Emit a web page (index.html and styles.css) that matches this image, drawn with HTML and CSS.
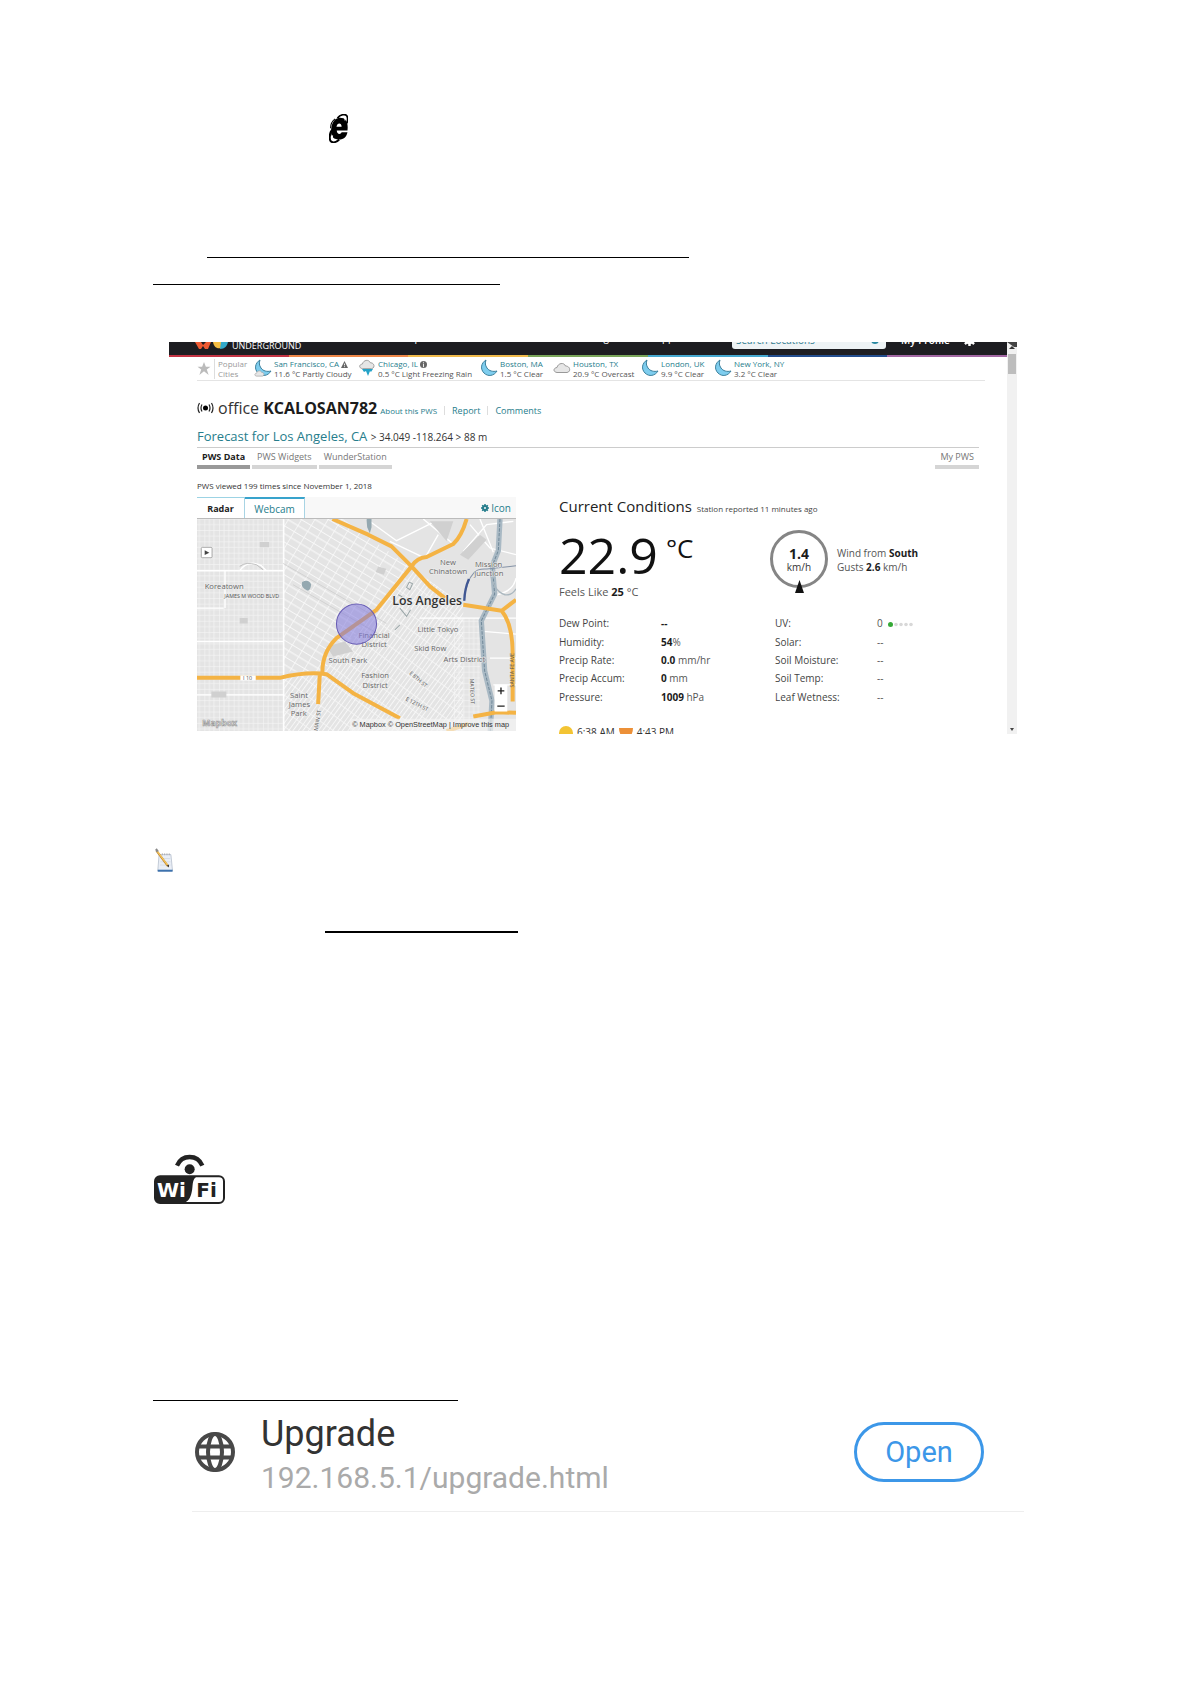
FILE: index.html
```html
<!DOCTYPE html>
<html lang="en">
<head>
<meta charset="utf-8">
<title>Weather station manual</title>
<link rel="stylesheet" href="styles.css">
</head>
<body>
<svg class="defs" width="0" height="0" aria-hidden="true">
  <defs>
    <symbol id="moon" viewBox="0 0 18 18"><path d="M6 1C1 4 0 10 4 14c4 4 10 3 13-2-4 1-8 0-10-3C5 6 5 4 6 1z" fill="#7ecdee" stroke="#3b7f9c" stroke-width="1"/></symbol>
    <symbol id="cloud" viewBox="0 0 18 12"><path d="M4 10.500C0 10 0 6 4 5.500 5 1 11 0 12.500 4c5 0 5.500 6 1.500 6.500z" fill="#e6e6e6" stroke="#999" stroke-width="1"/></symbol>
    <symbol id="gear" viewBox="-8 -8 16 16"><circle r="4" fill="none" stroke="currentColor" stroke-width="4"/><path d="M0-8V-4M0 4V8M-8 0H-4M4 0H8M-5.600-5.600l2 2M3.600 3.600l2 2M-5.600 5.600l2-2M3.600-3.600l2-2" stroke="currentColor" stroke-width="3"/></symbol>
  </defs>
</svg>
<main class="page">
  <svg class="browser-icon" viewBox="0 0 54 84" role="img" aria-label="Browser">
    <path d="M53 48H22c0 11 11 13 14 5h17C50 68 42 74 29 74 8 74 3 60 6 42 9 22 18 11 32 11c16 0 24 12 21 37z"/>
    <path d="M21 37c2-13 15-13 15 0z" fill="#fff"/>
    <path d="M24 12C33 1 46-1 51 5c4 6 3 13 0 22" fill="none" stroke="#000" stroke-width="5"/>
    <path d="M4 41c0-12 5-21 13-27" fill="none" stroke="#000" stroke-width="3"/>
    <path d="M6 48C0 62 0 76 6 80c6 4 16 1 23-6" fill="none" stroke="#000" stroke-width="6"/>
    <path d="M34 9c9-3 13 2 12 10M10 62c-3 10 1 14 9 11" fill="none" stroke="#fff" stroke-width="3"/>
  </svg>
  <hr class="rule rule-long">
  <hr class="rule rule-medium">

  <section class="frame">
    <div class="site">
      <header class="nav">
        <svg class="logo" viewBox="0 0 34 8"><path d="M0 0h6l2 3 3-3h5l-3 7h-3L8 4 6 7H4z" fill="#ee5a32"/><path d="M18 0c1 6 5 7 8 6V0z" fill="#f5bd42"/><path d="M25 7c5 0 7-3 8-7h-7z" fill="#32a9c9"/></svg>
        <span class="brand">UNDERGROUND</span>
        <nav class="menu"><a href="#">Maps</a><a href="#">Blogs</a><a href="#">Apps</a></nav>
        <label class="search"><input type="text" placeholder="Search Locations" aria-label="Search Locations"><svg viewBox="0 0 9 9"><circle cx="4" cy="4" r="3" fill="none" stroke="#2787a0" stroke-width="2"/></svg></label>
        <a class="profile" href="#">My Profile</a>
        <svg class="nav-gear"><use href="#gear"/></svg>
      </header>
      <div class="stripe"><i></i><i></i><i></i><i></i><i></i><i></i><i></i></div>
      <div class="content">
        <div class="cities">
          <svg class="star" viewBox="0 0 14 14"><path d="M7 0l2 5h5l-4 3 2 6-5-4-5 4 2-6-4-3h5z" fill="#bbb"/></svg>
          <span class="popular">Popular<br>Cities</span>
          <div class="city"><svg viewBox="0 0 18 18"><use href="#moon" width="18" height="18"/><use href="#cloud" y="11" width="11" height="7"/></svg><p><a href="#">San Francisco, CA</a> <svg class="mark" viewBox="0 0 8 8"><path d="M4 0l4 8H0z" fill="#666"/><path d="M4 3v2M4 6v1" stroke="#fff"/></svg><br>11.6 °C Partly Cloudy</p></div>
          <div class="city"><svg viewBox="0 0 18 18"><use href="#cloud" width="18" height="11"/><path d="M4 10h11l-2 3-1-1-2 5-2-5-2 1z" fill="#24a3c8"/></svg><p><a href="#">Chicago, IL</a> <svg class="mark" viewBox="0 0 8 8"><circle cx="4" cy="4" r="4" fill="#666"/><path d="M4 1v1M4 3v4" stroke="#fff"/></svg><br>0.5 °C Light Freezing Rain</p></div>
          <div class="city"><svg><use href="#moon"/></svg><p><a href="#">Boston, MA</a><br>1.5 °C Clear</p></div>
          <div class="city"><svg viewBox="0 0 18 18"><use href="#cloud" y="3" width="18" height="12"/></svg><p><a href="#">Houston, TX</a><br>20.9 °C Overcast</p></div>
          <div class="city"><svg><use href="#moon"/></svg><p><a href="#">London, UK</a><br>9.9 °C Clear</p></div>
          <div class="city"><svg><use href="#moon"/></svg><p><a href="#">New York, NY</a><br>3.2 °C Clear</p></div>
        </div>

        <div class="station">
          <svg class="signal" viewBox="0 0 17 12"><circle cx="8.500" cy="6" r="2.500"/><path d="M5 2.500q-2 3.500 0 7M2.500 1q-3 5 0 10M12 2.500q2 3.500 0 7M14.500 1q3 5 0 10" fill="none" stroke="#222" stroke-width="1.200"/></svg>
          <h1>office <b>KCALOSAN782</b></h1>
          <a class="about" href="#">About this PWS</a><a href="#">Report</a><a href="#">Comments</a>
        </div>
        <p class="forecast"><a href="#">Forecast for Los Angeles, CA</a> <small>&gt; 34.049 -118.264 &gt; 88 m</small></p>
        <nav class="tabs"><a class="active" href="#">PWS Data</a><a href="#">PWS Widgets</a><a href="#">WunderStation</a><a class="mine" href="#">My PWS</a></nav>
        <p class="viewed">PWS viewed 199 times since November 1, 2018</p>

        <div class="columns">
          <section class="radar">
            <div class="radar-tabs"><button class="on">Radar</button><button>Webcam</button><a href="#"><svg><use href="#gear"/></svg>Icon</a></div>
            <svg class="map" viewBox="22 103 956 636" role="img" aria-label="Map of Los Angeles">
              <defs>
                <pattern id="blocks" width="44" height="34" patternUnits="userSpaceOnUse"><path d="M0 1H44M1 0V34M15 0V34M29 0V34" stroke="#f6f6f6" stroke-width="2"/><path d="M0 18H44" stroke="#f4f4f4" stroke-width="2"/></pattern>
                <pattern id="tilted" width="34" height="42" patternUnits="userSpaceOnUse" patternTransform="rotate(31)"><path d="M0 1H34M1 0V42M0 22H34" stroke="#f8f8f8" stroke-width="3"/></pattern>
                <pattern id="dense" width="24" height="38" patternUnits="userSpaceOnUse" patternTransform="rotate(36)"><path d="M0 1H24M1 0V38M12 0V38" stroke="#f8f8f8" stroke-width="3"/></pattern>
              </defs>
              <path d="M22 103h956v636H22z" fill="#e4e4e4"/>
              <path d="M22 103h260v636H22z" fill="url(#blocks)"/>
              <path d="M282 103H460L660 245 560 375 400 560H282z" fill="url(#tilted)"/>
              <path d="M660 245L820 360V739H282V580L400 560 560 375z" fill="url(#dense)"/>
              <path d="M790 400h80v339h-80z" fill="url(#blocks)"/>
              <path d="M530 103l90 65 110-55M600 170l105 50 40-70M700 103l90 75M820 200l70-80 80-10M840 120l60 70 78 20M870 103l40 100M920 330q50-10 58-50M22 258h260M106 258v112M22 370h80M22 470h260M282 103v636M22 630h260M150 258q25-35 65-15l15 15M690 400h288M880 440l98 8M900 520h78M910 600h68" fill="none" stroke="#fff" stroke-width="4"/>
              <path d="M210 172h28v16h-28zM565 245l24 7-7 18-25-8zM150 400h24v16h-24zM65 620h45v18H65zM720 110l70 0-20 60zM410 485l55-15 25 30-60 15zM810 210l60-60 20 15-55 60z" fill="#d0d0d0"/>
              <path d="M280 236l310 180M310 300l260 150" stroke="#c8c8c8" stroke-width="2"/>
              <path d="M150 245q20-15 50-5l20 15" fill="none" stroke="#aaa" stroke-width="2"/>
              <path d="M337 292q20-10 27 7-2 20-12 18-20-8-15-25M530 103h15v25l-5 18-8-18z" fill="#94a8b0"/>
              <path d="M930 103l-5 95-18 45 7 85-40 80 10 150 22 90-5 91" fill="none" stroke="#a9b9c4" stroke-width="16"/>
              <path d="M930 103l-5 95-18 45 7 85-40 80 10 150 22 90-5 91" fill="none" stroke="#71899a" stroke-width="3" stroke-dasharray="10 4"/>
              <path d="M823 348q5-60 30-85 10-12 38-10l87-10" fill="none" stroke="#8492a6" stroke-width="3"/><path d="M823 348q1-35 14-65" fill="none" stroke="#405793" stroke-width="7"/>
              <path d="M900 260q10 60 45 70 20 3 33-18" fill="none" stroke="#aab7bf" stroke-width="4"/>
              <path d="M428 103L535 150 605 185 665 245 720 305 765 340M665 245Q680 220 710 217L790 178Q815 155 830 103M665 245L560 375 440 460Q395 505 398 568M22 579H270Q350 560 410 568L490 625 630 700M390 568l-5 90M820 360L935 378 978 345M935 378Q970 420 968 520V650M850 695L920 682 978 684M770 739l65-22" fill="none" stroke="#f4b344" stroke-width="12" stroke-linejoin="round"/>
              <path d="M650 308l8-16 10 5-8 18zM625 330l12 6M630 370l20 25 12-20M615 435l15-15" fill="none" stroke="#9aa6a8" stroke-width="3"/>
              <g class="places">
                <text x="45" y="314">Koreatown</text><text x="750" y="241">New</text><text x="717" y="269">Chinatown</text><text x="855" y="247">Mission</text><text x="853" y="275">Junction</text>
                <text x="683" y="443">Little Tokyo</text><text x="506" y="461">Financial</text><text x="515" y="488">District</text><text x="673" y="498">Skid Row</text><text x="761" y="533">Arts District</text><text x="416" y="535">South Park</text><text x="514" y="581">Fashion</text><text x="518" y="608">District</text><text x="301" y="640">Saint</text><text x="297" y="667">James</text><text x="303" y="694">Park</text>
              </g>
              <g class="roads-text"><text x="104" y="340">JAMES M WOOD BLVD</text><path d="M152 572h46v15h-46z" fill="#fff"/><text x="160" y="586">I 10</text><text transform="translate(657 567) rotate(40)">E 8TH ST</text><text transform="translate(646 646) rotate(27)">E 12TH ST</text><text transform="translate(840 582) rotate(88)">MATEO ST</text><text transform="translate(971 608) rotate(-90)">SANTA FE AVE</text><text transform="translate(383 738) rotate(-80)">MAIN ST</text></g>
              <text class="la" x="607" y="361">Los Angeles</text>
              <circle cx="500" cy="418" r="60" fill="#8179dc" fill-opacity=".55" stroke="#665bb4" stroke-width="3"/>
              <rect x="35" y="188" width="32" height="31" rx="3" fill="#fff" stroke="#888" stroke-width="2"/><path d="M45 197l14 7-14 7z" fill="#444"/>
              <path d="M914 600h38v80h-38z" fill="#fff"/><path d="M923 618h20M933 608v20M922 664h22" stroke="#222" stroke-width="4"/>
              <text class="mapbox" x="38" y="722">Mapbox</text>
              <path d="M480 702h498v37H480z" fill="#f4f4f4" opacity=".65"/><text class="credit" x="487" y="726">© Mapbox © OpenStreetMap | Improve this map</text>
            </svg>
          </section>

          <section class="conditions">
            <h2>Current Conditions <small>Station reported 11 minutes ago</small></h2>
            <div class="now">
              <div class="temperature"><p class="degrees">22.9<sup>°C</sup></p><p class="feels">Feels Like <b>25</b> °C</p></div>
              <div class="dial"><p><b>1.4</b>km/h</p><svg viewBox="0 0 9 13"><path d="M4.500 0L9 13H0z" fill="#111"/></svg></div>
              <p class="wind">Wind from <b>South</b><br>Gusts <b>2.6</b> km/h</p>
            </div>
            <div class="readings">
              <table>
                <tr><th scope="row">Dew Point:</th><td><b>--</b></td></tr>
                <tr><th scope="row">Humidity:</th><td><b>54</b>%</td></tr>
                <tr><th scope="row">Precip Rate:</th><td><b>0.0</b> mm/hr</td></tr>
                <tr><th scope="row">Precip Accum:</th><td><b>0</b> mm</td></tr>
                <tr><th scope="row">Pressure:</th><td><b>1009</b> hPa</td></tr>
              </table>
              <table>
                <tr><th scope="row">UV:</th><td>0 <svg class="uv" viewBox="0 0 25 5"><circle cx="2.500" cy="2.500" r="2.500" fill="#35a936"/><g fill="#d8d8d8"><circle cx="8" cy="2.500" r="1.800"/><circle cx="13" cy="2.500" r="1.800"/><circle cx="18" cy="2.500" r="1.800"/><circle cx="23" cy="2.500" r="1.800"/></g></svg></td></tr>
                <tr><th scope="row">Solar:</th><td>--</td></tr>
                <tr><th scope="row">Soil Moisture:</th><td>--</td></tr>
                <tr><th scope="row">Soil Temp:</th><td>--</td></tr>
                <tr><th scope="row">Leaf Wetness:</th><td>--</td></tr>
              </table>
            </div>
            <p class="sun"><svg viewBox="0 0 14 14"><circle cx="7" cy="7" r="7" fill="#f3c433"/></svg>6:38 AM<svg viewBox="0 0 14 14"><path d="M0 2h14q0 9-7 9T0 2" fill="#ec9038"/></svg>4:43 PM</p>
          </section>
        </div>
      </div>
    </div>
    <div class="scrollbar"><svg viewBox="0 0 10 12"><path d="M0 0h10v5H7z" fill="#444"/><path d="M2 7l3-3 3 3z" fill="#333"/></svg><i></i><svg class="down" viewBox="0 0 10 12"><path d="M3 6h4L5 9z" fill="#444"/></svg></div>
  </section>

  <svg class="note-icon" viewBox="0 0 54 76" role="img" aria-label="Note"><path d="M12 20h36l5 50H8z" fill="#e9eef6" stroke="#a9b4c4" stroke-width="2"/><path d="M8 66h45v6H8z" fill="#3c72ae"/><path d="M15 18v6M22 16v6M29 16v6M36 16v6M43 16v6" stroke="#999" stroke-width="2"/><path d="M18 32h28M16 42h31M15 52h32" stroke="#cdd5df" stroke-width="2"/><path d="M4 8l35 47" stroke="#b9812b" stroke-width="6"/><path d="M5 8l33 44" stroke="#f7c65b" stroke-width="4"/><path d="M0 5l5-4 6 8-6 4z" fill="#888"/><path d="M36 54l6-4 0 9z" fill="#333"/></svg>
  <hr class="rule rule-thick">

  <svg class="wifi-icon" viewBox="0 0 216 150" role="img" aria-label="WiFi">
    <path d="M69 35q11-26 38-26t38 26" fill="none" stroke="#222" stroke-width="13"/><circle cx="107" cy="46" r="15" fill="#222"/>
    <rect x="3" y="67" width="207" height="80" rx="15" fill="#fff" stroke="#222" stroke-width="6"/><path d="M18 67h112c-18 8-12 30-17 48-4 18-10 29-27 32H18Q3 147 3 132V82Q3 67 18 67z" fill="#222"/>
    <text x="9" y="130" fill="#fff">Wi</text><text x="127" y="130" fill="#222">Fi</text>
  </svg>
  <hr class="rule rule-short">

  <section class="upgrade">
    <svg class="globe" viewBox="0 0 40 40" fill="none" stroke="#484848" stroke-width="4"><circle cx="20" cy="20" r="18"/><ellipse cx="20" cy="20" rx="7" ry="18"/><path d="M3 14.500h34M3 25.500h34"/></svg>
    <div><h2>Upgrade</h2><p>192.168.5.1/upgrade.html</p></div>
    <button>Open</button>
  </section>
</main>
</body>
</html>
```
FILE: styles.css
```css
* { box-sizing: border-box; }
body { margin: 0; background: #fff; color: #333; font-family: "Open Sans", "Noto Sans", sans-serif; }
h1, h2, p { margin: 0; font-weight: 400; }
a { color: #267d8c; text-decoration: none; }
b { color: #1c1c1c; }
button { font-family: inherit; cursor: pointer; }
svg { display: block; flex: none; }
.defs { position: absolute; }

.page { padding: 114px 166px 172px 152px; }
.browser-icon { width: 19px; height: 29px; margin-left: 177px; }
.rule { height: 1px; margin: 0; border: 0; background: #000; }
.rule-long { width: 482px; margin: 114px 0 0 55px; }
.rule-medium { width: 347px; margin: 26px 0 0 1px; }
.rule-thick { width: 193px; height: 2px; margin: 58px 0 0 173px; }
.rule-short { width: 305px; margin: 196px 0 0 1px; }

/* weather site inside its scrolling pane */
.frame { display: flex; height: 392px; margin: 57px 7px 0 17px; overflow: hidden; }
.site { flex: 1; min-width: 0; }
.nav { display: flex; align-items: flex-end; height: 13px; padding: 0 31px 0 26px; overflow: hidden; background: #1d1d21; color: #fff; }
.logo { width: 34px; height: 8px; align-self: flex-start; }
.brand { width: 116px; padding-left: 3px; font: 9px/18px "Open Sans", sans-serif; }
.menu { display: flex; flex: 1; padding-left: 55px; font-size: 10px; line-height: 36px; }
.menu a { color: #fff; }
.menu a:nth-child(2) { margin-left: 163px; }
.menu a:nth-child(3) { margin-left: 42px; }
.search { display: flex; align-items: flex-end; width: 154px; height: 20px; margin-bottom: 6px; padding: 0 6px 2px 4px; border-radius: 3px; background: #eef3f5; }
.search input { flex: 1; min-width: 0; height: 14px; padding: 0; border: 0; background: none; font: 10px/14px "Open Sans", sans-serif; }
.search input::placeholder { color: #327b90; opacity: 1; }
.search svg { width: 9px; height: 9px; margin-bottom: 2px; }
.profile { width: 62px; margin-left: 15px; color: #fff; font-size: 10px; font-weight: 600; line-height: 30px; }
.nav-gear { width: 13px; height: 13px; margin-bottom: 9px; }
.stripe { display: flex; height: 2px; }
.stripe i { flex: 1; background: #c33343; }
.stripe i:nth-child(2) { background: #ee8748; }
.stripe i:nth-child(3) { background: #f0ba4b; }
.stripe i:nth-child(4) { background: #7aa65a; }
.stripe i:nth-child(5) { background: #45a8d0; }
.stripe i:nth-child(6) { background: #224d8e; }
.stripe i:nth-child(7) { background: #a267a3; }
.content { padding: 0 28px; }

.cities { display: grid; grid-template-columns: 17px 40px 104px 122px 73px 88px 73px 1fr; align-items: center; height: 24px; margin-right: -6px; border-bottom: 1px solid #e4e4e4; font-size: 8px; line-height: 10px; color: #555; }
.star { width: 14px; height: 13px; }
.popular { padding-left: 3px; border-left: 1px solid #ddd; color: #999; }
.city { display: flex; gap: 2px; white-space: nowrap; }
.city > svg { width: 18px; height: 18px; }
.mark { display: inline-block; width: 7px; height: 7px; vertical-align: -1px; }

.station { display: flex; align-items: baseline; margin-top: 16px; font-size: 9px; line-height: 22px; }
.signal { width: 17px; height: 12px; margin-right: 4px; }
.station h1 { margin-right: 3px; font-size: 16px; line-height: 22px; }
.station .about { font-size: 8px; }
.station a + a { margin-left: 7px; padding-left: 7px; border-left: 1px solid #ddd; line-height: 9px; }
.forecast { height: 21px; margin-top: 5px; border-bottom: 1px solid #ccc; font-size: 13px; line-height: 18px; }
.forecast small { font-size: 10px; line-height: 10px; }
.tabs { display: flex; gap: 2px; font-size: 9px; line-height: 17px; }
.tabs a { padding: 0 5px; border-bottom: 4px solid #d5d5d5; color: #777; }
.tabs .active { border-color: #999; color: #1c1c1c; font-weight: 700; }
.tabs .mine { margin-left: auto; }
.viewed { margin: 11px 0 5px; font-size: 8px; line-height: 12px; }

.columns { display: grid; grid-template-columns: 319px 1fr; gap: 43px; }
.radar-tabs { display: flex; height: 22px; border-bottom: 1px solid #bbb; background: #f8f8f8; font-size: 9px; }
.radar-tabs button { width: 60px; padding: 0; border: 0; border-top: 2px solid #38a3cc; border-right: 1px solid #a8d4e4; background: #fff; color: #267d8c; font-size: 10px; }
.radar-tabs .on { width: 48px; border-top: 1px solid #9cd3e4; color: #222; font-size: 9px; font-weight: 700; }
.radar-tabs a { display: flex; align-items: center; gap: 2px; margin-left: auto; padding-right: 5px; font-size: 10px; }
.radar-tabs svg { width: 8px; height: 8px; }
.map { width: 100%; height: auto; }
.places { font-size: 23px; fill: #666; stroke: #eee; stroke-width: 3px; paint-order: stroke; }
.roads-text { font-size: 16px; fill: #555; }
.la { font-size: 37px; font-weight: 600; fill: #333; stroke: #eee; stroke-width: 3px; paint-order: stroke; }
.mapbox { font-size: 26px; font-weight: 700; fill: #eee; stroke: #999; stroke-width: 2px; }
.credit { font-family: "Liberation Sans", sans-serif; font-size: 22px; fill: #333; }

.conditions h2 { font-size: 15px; line-height: 18px; color: #222; }
.conditions h2 small { margin-left: 1px; font-size: 8px; line-height: 10px; color: #444; }
.now { display: flex; height: 99px; }
.temperature { width: 211px; padding-top: 15px; }
.degrees { display: flex; gap: 8px; font-size: 50px; line-height: 50px; color: #111; }
.degrees sup { font-size: 26px; line-height: 36px; }
.feels { margin-top: 4px; font-size: 11px; line-height: 16px; color: #555; }
.dial { display: flex; flex-direction: column; align-items: center; width: 58px; height: 58px; margin-top: 15px; border: 3px solid #858585; border-radius: 50%; font-size: 10px; line-height: 12px; text-align: center; }
.dial p { padding-top: 13px; }
.dial b { display: block; font-size: 14px; line-height: 15px; }
.dial svg { width: 9px; height: 13px; margin-top: 7px; }
.wind { padding: 31px 0 0 9px; font-size: 10px; line-height: 14px; color: #555; }
.readings { display: flex; }
.readings table { width: 216px; height: 92px; border-spacing: 0; font-size: 10px; line-height: 16px; color: #555; }
.readings th { width: 102px; padding: 0; color: #444; font-weight: 400; text-align: left; }
.readings td { padding: 0; }
.uv { display: inline-block; width: 25px; height: 5px; margin-left: 3px; }
.sun { display: flex; align-items: center; gap: 4px; margin-top: 18px; font-size: 10px; line-height: 16px; }
.sun svg { width: 14px; height: 14px; align-self: flex-end; }
.scrollbar { display: flex; flex-direction: column; width: 10px; background: #f1f1f1; }
.scrollbar svg { width: 10px; height: 12px; }
.scrollbar i { height: 20px; margin: 0 1px; background: #bdbdbd; }
.scrollbar .down { margin-top: auto; }

.note-icon { width: 18px; height: 25px; margin: 114px 0 0 3px; }
.wifi-icon { width: 72px; height: 50px; margin: 221px 0 0 2px; font: 900 60px "DejaVu Sans", sans-serif; }

.upgrade { display: flex; align-items: center; margin-left: 40px; padding: 5px 40px 13px 3px; border-bottom: 1px solid #eee; font-family: Roboto, sans-serif; }
.globe { width: 40px; height: 40px; }
.upgrade div { flex: 1; margin-left: 26px; padding-top: 4px; }
.upgrade h2 { font-size: 36px; line-height: 48px; color: #333; }
.upgrade p { font-size: 30px; line-height: 40px; color: #aaa; }
.upgrade button { width: 130px; height: 60px; border: 3px solid #3c97e8; border-radius: 30px; background: #fff; color: #3c97e8; font-size: 29px; }
```
